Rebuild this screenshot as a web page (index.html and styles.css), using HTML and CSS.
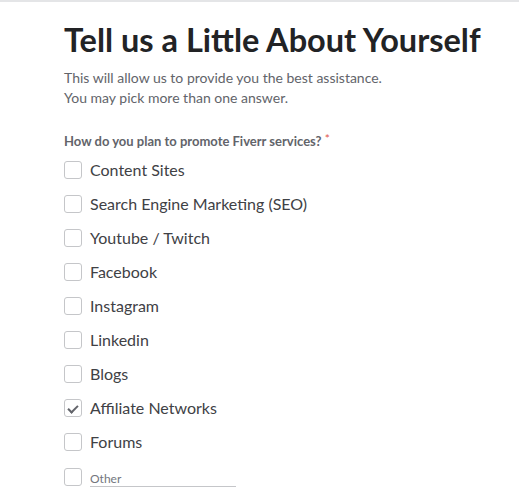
FILE: index.html
```html
<!DOCTYPE html>
<html lang="en">
<head>
    <meta charset="UTF-8">
    <meta name="viewport" content="width=device-width, initial-scale=1.0">
    <title>About Yourself</title>
    <link rel="stylesheet" href="styles.css">
</head>
<body>

    <!-- Intro -->
    <main class="survey">
        <h1>Tell us a Little About Yourself</h1>
        <p class="intro">This will allow us to provide you the best assistance.<br>You may pick more than one answer.</p>

        <!-- Question -->
        <fieldset class="question">
            <legend>How do you plan to promote Fiverr services? <span class="required">*</span></legend>

            <div class="options">
                <label class="option"><input type="checkbox"><span class="box"></span>Content Sites</label>
                <label class="option"><input type="checkbox"><span class="box"></span>Search Engine Marketing (SEO)</label>
                <label class="option"><input type="checkbox"><span class="box"></span>Youtube / Twitch</label>
                <label class="option"><input type="checkbox"><span class="box"></span>Facebook</label>
                <label class="option"><input type="checkbox"><span class="box"></span>Instagram</label>
                <label class="option"><input type="checkbox"><span class="box"></span>Linkedin</label>
                <label class="option"><input type="checkbox"><span class="box"></span>Blogs</label>
                <label class="option"><input type="checkbox" checked><span class="box"></span>Affiliate Networks</label>
                <label class="option"><input type="checkbox"><span class="box"></span>Forums</label>
                <div class="option other">
                    <label><input type="checkbox"><span class="box"></span></label>
                    <input type="text" class="other-input" placeholder="Other">
                </div>
            </div>
        </fieldset>
    </main>

</body>
</html>
```

FILE: styles.css
```css
/* Basic Reset */
* {
    margin: 0;
    padding: 0;
    box-sizing: border-box;
}

body {
    font-family: 'Lato', 'Liberation Sans', sans-serif;
    background-color: #fff;
    color: #404145;
    border-top: 2px solid #e4e5e7;
}

.survey {
    padding: 18px 0 0 64px;
}

.survey h1 {
    font-size: 32.5px;
    font-weight: 700;
    color: #222325;
    line-height: 40px;
}

.intro {
    margin-top: 8px;
    font-size: 14px;
    line-height: 20px;
    color: #62646a;
}

/* Question */
.question {
    border: none;
    margin-top: 24px;
}

.question legend {
    font-size: 13px;
    font-weight: 700;
    color: #62646a;
    line-height: 18px;
}

.required {
    color: #e2574c;
    font-weight: 400;
    vertical-align: top;
    font-size: 12px;
    line-height: 14px;
}

.options {
    display: flex;
    flex-direction: column;
    gap: 16px;
    margin-top: 11px;
}

.option {
    display: flex;
    align-items: center;
    gap: 8px;
    font-size: 16px;
    line-height: 18px;
    color: #404145;
}

.option input[type="checkbox"] {
    display: none;
}

.box {
    display: block;
    width: 18px;
    height: 18px;
    border: 1px solid #c5c6c9;
    border-radius: 3px;
    position: relative;
}

.option input:checked + .box::after {
    content: '';
    position: absolute;
    left: 5px;
    top: 3px;
    width: 4px;
    height: 8px;
    border: solid #62646a;
    border-width: 0 2px 2px 0;
    transform: rotate(45deg);
}

.other label {
    display: block;
}

.other-input {
    width: 146px;
    border: none;
    border-bottom: 1px solid #c5c6c9;
    font-family: inherit;
    font-size: 12px;
    color: #404145;
    padding: 4px 0 0;
    outline: none;
}

.other-input::placeholder {
    color: #74767e;
}
```
